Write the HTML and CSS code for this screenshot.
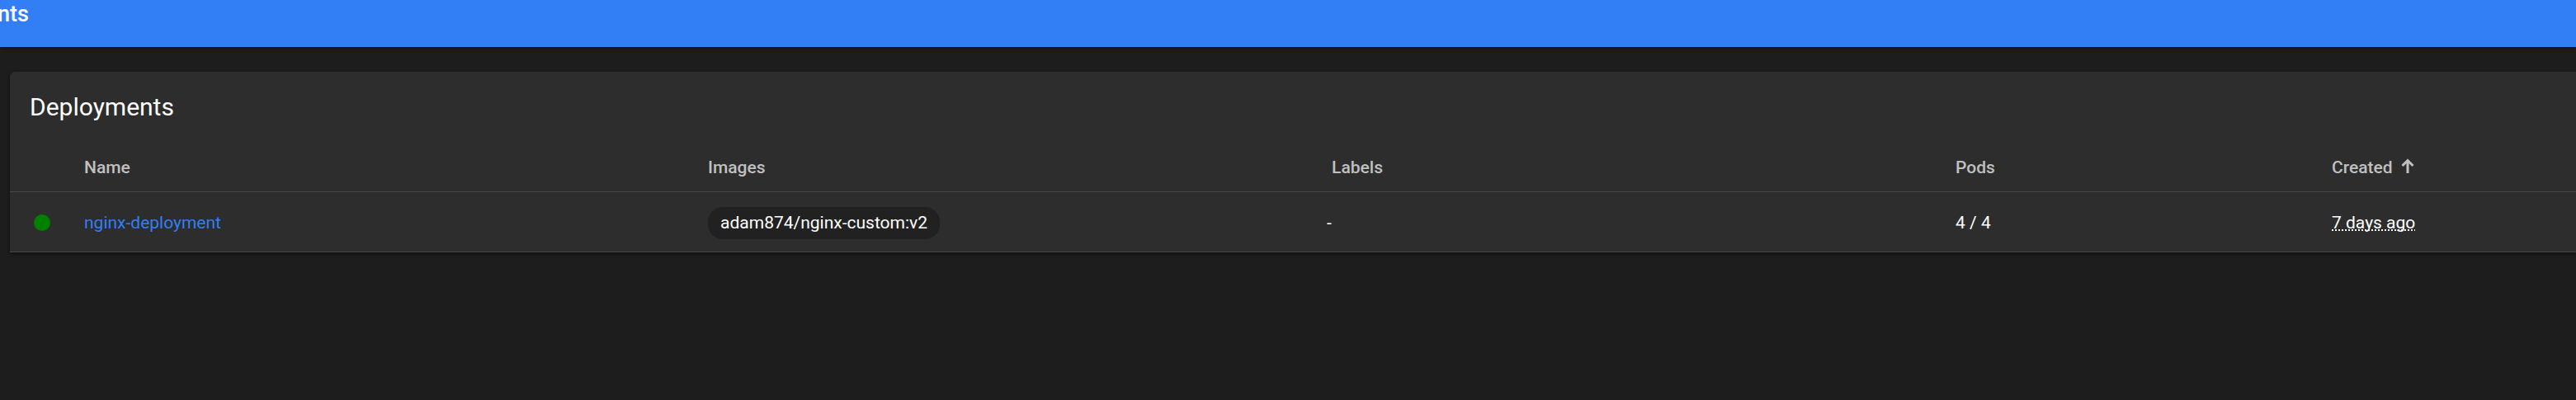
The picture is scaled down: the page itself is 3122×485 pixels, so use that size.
FILE: index.html
```html
<!DOCTYPE html>
<html lang="en">
<head>
<meta charset="utf-8">
<title>Deployments</title>
<link rel="stylesheet" href="styles.css">
</head>
<body>
<header class="toolbar"><span class="breadcrumb">nts</span></header>
<main class="content">
  <section class="card">
    <h1 class="card-title">Deployments</h1>
    <table class="list">
      <colgroup>
        <col class="col-status"><col class="col-wide"><col class="col-wide"><col class="col-wide"><col class="col-pods"><col>
      </colgroup>
      <thead>
        <tr>
          <td></td>
          <th scope="col">Name</th>
          <th scope="col">Images</th>
          <th scope="col">Labels</th>
          <th scope="col">Pods</th>
          <th scope="col" aria-sort="ascending">
            <button class="sort" type="button">Created
              <svg class="arrow" viewBox="0 0 16 18" aria-hidden="true"><path d="M8 18V3M1.5 9 8 2.5 14.5 9"/></svg>
            </button>
          </th>
        </tr>
      </thead>
      <tbody>
        <tr>
          <td class="status"><span class="dot"></span></td>
          <td><a class="link" href="#nginx-deployment">nginx-deployment</a></td>
          <td><span class="chip">adam874/nginx-custom:v2</span></td>
          <td><span class="no-labels">-</span></td>
          <td>4 / 4</td>
          <td><span class="age">7 days ago</span></td>
        </tr>
      </tbody>
    </table>
  </section>
</main>
</body>
</html>
```
FILE: styles.css
```css
* {
  box-sizing: border-box;
}

body {
  margin: 0;
  min-height: 100vh;
  overflow-x: hidden;
  background: #1d1d1d;
  color: #fff;
  font: 21px/30px Roboto, sans-serif;
}

.toolbar {
  position: relative;
  height: 57px;
  background: #327ef5;
  box-shadow: 0 1px 4px rgba(0, 0, 0, 0.6);
}

.breadcrumb {
  display: block;
  margin-left: -3px;
  font-size: 27px;
  font-weight: 500;
  line-height: 34px;
}

.content {
  padding: 30px 0 0 12px;
}

.card {
  background: #2d2d2d;
  border-radius: 6px 0 0 0;
  box-shadow: 0 2px 4px rgba(0, 0, 0, 0.5);
}

.card-title {
  margin: 0;
  padding: 24px 24px 0;
  font-size: 30px;
  font-weight: 400;
  line-height: 38px;
}

.list {
  width: 100%;
  border-collapse: separate;
  border-spacing: 0;
  table-layout: fixed;
}

.col-status {
  width: 90px;
}

.col-wide {
  width: 24.31%;
}

.col-pods {
  width: 14.66%;
}

.list th,
.list td {
  padding: 2px 0 0;
  height: 73px;
  border-bottom: 1px solid #474747;
  text-align: left;
  vertical-align: middle;
}

.list thead th,
.list thead td {
  height: 84px;
  padding-top: 24px;
  color: #c0c0c0;
  font-weight: 500;
}

.sort {
  display: flex;
  align-items: center;
  gap: 10px;
  padding: 0;
  border: 0;
  background: none;
  color: inherit;
  font: inherit;
}

.arrow {
  width: 16px;
  height: 18px;
  margin-bottom: 4px;
  fill: none;
  stroke: currentColor;
  stroke-width: 3;
}

.list .status {
  padding-left: 29px;
}

.dot {
  display: block;
  width: 20px;
  height: 20px;
  border-radius: 50%;
  background: #008000;
}

.link {
  color: #327ef5;
  text-decoration: none;
}

.chip {
  display: inline-block;
  padding: 0 15px;
  border-radius: 18px;
  background: #212121;
  line-height: 39px;
  vertical-align: middle;
}

.no-labels {
  margin-left: -6px;
}

.age {
  text-decoration: underline dotted 2px;
  text-decoration-skip-ink: none;
}
```
